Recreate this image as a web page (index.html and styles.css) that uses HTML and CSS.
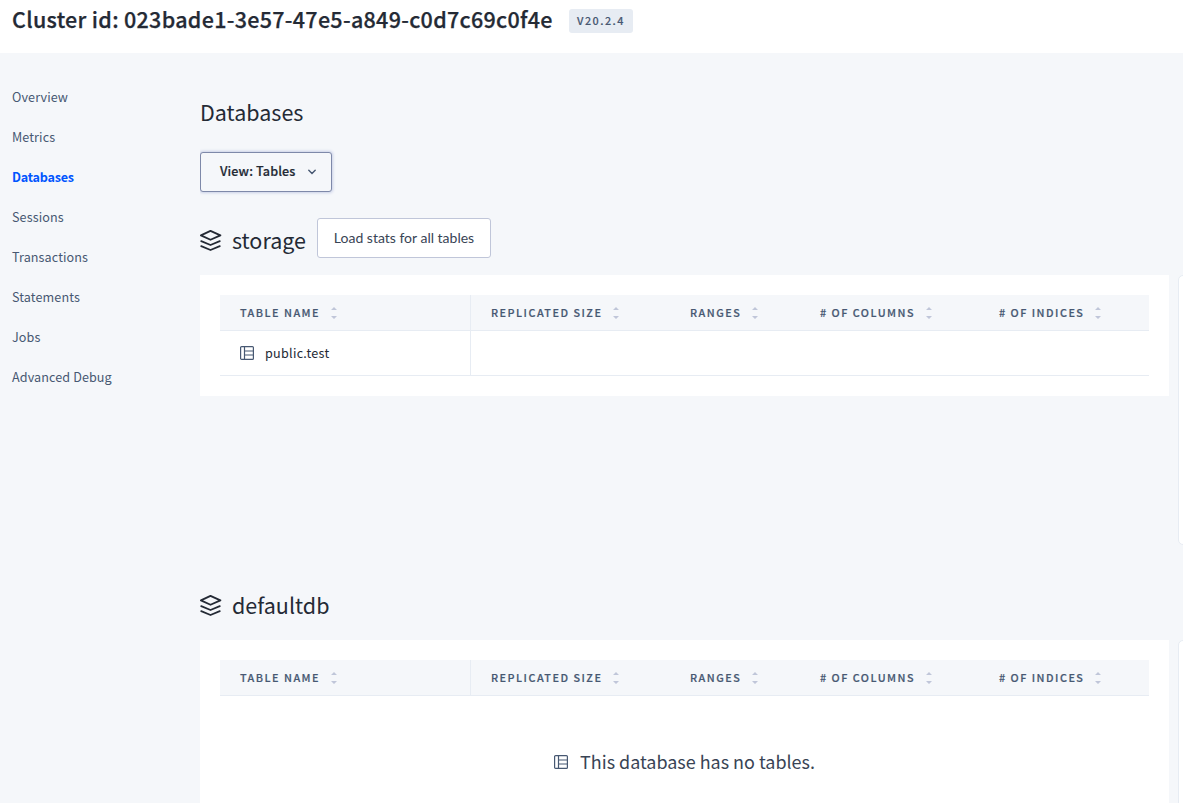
FILE: index.html
```html
<!DOCTYPE html>
<html lang="en">
<head>
<meta charset="utf-8">
<title>Databases</title>
<link rel="stylesheet" href="styles.css">
</head>
<body>
<svg width="0" height="0" class="defs">
  <symbol id="stack" viewBox="0 0 22 22"><g fill="none" stroke="currentColor" stroke-width="1.8" stroke-linejoin="round" stroke-linecap="round"><path d="M10.5 .9 20.4 5.4 10.5 9.8.9 5.4Z"/><path d="M1.2 11.2l9.3 3.8 9.3-3.8"/><path d="M1.2 16.2l9.3 3.8 9.3-3.8"/></g></symbol>
  <symbol id="table" viewBox="0 0 14 14"><g fill="none" stroke="currentColor" stroke-width="1.2"><rect x=".6" y=".6" width="12.8" height="12.8" rx="1"/><path d="M4.5 .6v12.8M4.5 5h9M4.5 9h9"/></g></symbol>
  <symbol id="sort" viewBox="0 0 6 12"><path fill="currentColor" d="M0 3 3 0l3 3zM0 9h6l-3 3z"/></symbol>
</svg>
<header class="header">
  <h1 class="cluster">Cluster id: 023bade1-3e57-47e5-a849-c0d7c69c0f4e</h1>
  <span class="version">V20.2.4</span>
</header>
<div class="body">
  <nav class="nav">
    <a class="link">Overview</a>
    <a class="link">Metrics</a>
    <a class="link active">Databases</a>
    <a class="link">Sessions</a>
    <a class="link">Transactions</a>
    <a class="link">Statements</a>
    <a class="link">Jobs</a>
    <a class="link">Advanced Debug</a>
  </nav>
  <main class="main">
    <h2 class="title">Databases</h2>
    <button class="dropdown"><span>View: Tables</span><svg class="chevron" viewBox="0 0 8 6"><path d="M.8 1.2 4 4.5l3.2-3.3" fill="none" stroke="currentColor" stroke-width="1.4" stroke-linecap="round"/></svg></button>
    <section class="database">
      <div class="heading"><svg class="stack"><use href="#stack"/></svg><h3 class="name">storage</h3><button class="load">Load stats for all tables</button></div>
      <div class="row">
        <div class="card">
          <div class="grid head">
            <div class="cell">TABLE NAME<svg class="sort"><use href="#sort"/></svg></div>
            <div class="cell">REPLICATED SIZE<svg class="sort"><use href="#sort"/></svg></div>
            <div class="cell">RANGES<svg class="sort"><use href="#sort"/></svg></div>
            <div class="cell"># OF COLUMNS<svg class="sort"><use href="#sort"/></svg></div>
            <div class="cell"># OF INDICES<svg class="sort"><use href="#sort"/></svg></div>
          </div>
          <div class="grid record">
            <div class="cell"><svg class="table"><use href="#table"/></svg><span class="tname">public.test</span></div>
          </div>
        </div>
        <aside class="summary"></aside>
      </div>
    </section>
    <section class="database">
      <div class="heading"><svg class="stack"><use href="#stack"/></svg><h3 class="name">defaultdb</h3></div>
      <div class="row">
        <div class="card">
          <div class="grid head">
            <div class="cell">TABLE NAME<svg class="sort"><use href="#sort"/></svg></div>
            <div class="cell">REPLICATED SIZE<svg class="sort"><use href="#sort"/></svg></div>
            <div class="cell">RANGES<svg class="sort"><use href="#sort"/></svg></div>
            <div class="cell"># OF COLUMNS<svg class="sort"><use href="#sort"/></svg></div>
            <div class="cell"># OF INDICES<svg class="sort"><use href="#sort"/></svg></div>
          </div>
          <div class="empty"><svg class="table"><use href="#table"/></svg><span class="message">This database has no tables.</span></div>
        </div>
        <aside class="summary"></aside>
      </div>
    </section>
  </main>
</div>
</body>
</html>
```
FILE: styles.css
```css
* { box-sizing: border-box; }
body {
  margin: 0;
  height: 803px;
  overflow: hidden;
  display: flex;
  flex-direction: column;
  background: #f5f7fa;
  color: #242a35;
  font-family: "Noto Sans CJK SC", "Noto Sans", sans-serif;
}
.defs { display: none; }
svg { flex: none; }
h1, h2, h3 { margin: 0; white-space: nowrap; }
.header {
  display: flex;
  align-items: flex-start;
  flex: none;
  height: 53px;
  padding: 0 12px;
  background: #fff;
}
.cluster {
  width: 557px;
  line-height: 38px;
  font-size: 21.5px;
  font-weight: 500;
  letter-spacing: 0.3px;
  -webkit-text-stroke: 0.25px currentColor;
}
.version {
  width: 64px;
  height: 24px;
  margin-top: 9px;
  padding-left: 8px;
  border-radius: 3px;
  background: #e7ecf3;
  color: #475872;
  font-size: 10.8px;
  font-weight: 500;
  line-height: 22px;
  letter-spacing: 1.5px;
  -webkit-text-stroke: 0.15px currentColor;
}
.body { display: flex; flex: 1; min-height: 0; background: #f5f7fa; }
.nav {
  display: flex;
  flex-direction: column;
  flex: none;
  width: 200px;
  padding: 24px 12px;
}
.link {
  height: 40px;
  line-height: 40px;
  color: #475872;
  font-size: 12.6px;
  letter-spacing: 0.1px;
}
.active { color: #0055ff; font-weight: 700; letter-spacing: -0.23px; }
.main { flex: none; width: 983px; padding-top: 40px; overflow: hidden; }
.title { height: 40px; line-height: 38px; font-size: 21.5px; font-weight: 400; }
.dropdown {
  display: flex;
  align-items: center;
  width: 132px;
  height: 40px;
  margin-top: 19px;
  padding: 0 15px 1px 19px;
  border: 1px solid #7e89a9;
  border-radius: 3px;
  background: #f5f7fa;
  box-shadow: 0 0 3px 1px #c8cfe6;
  color: #242a35;
  font: 500 12.6px "Noto Sans CJK SC", sans-serif;
  letter-spacing: 0.12px;
  -webkit-text-stroke: 0.2px currentColor;
  white-space: nowrap;
}
.dropdown span { width: 88px; padding-bottom: 2px; text-align: left; }
.chevron { width: 8px; height: 6px; color: #475872; }
.database { height: 365px; margin-top: 18px; }
.database + .database { margin-top: 0; }
.heading { display: flex; height: 65px; padding-top: 8px; }
.stack { width: 22px; height: 22px; margin-top: 12px; color: #242a35; }
.name { margin: 2px 0 0 10px; width: 85px; font-size: 21.5px; line-height: 40px; font-weight: 400; }
.load {
  width: 174px;
  height: 40px;
  padding: 0 0 2px;
  border: 1px solid #c0c6d9;
  border-radius: 3px;
  background: #fff;
  color: #394455;
  font: 400 14px Lato, sans-serif;
  white-space: nowrap;
}
.row { display: flex; align-items: flex-start; gap: 9px; }
.card { flex: none; width: 969px; padding: 20px; background: #fff; }
.summary {
  flex: none;
  width: 40px;
  height: 270px;
  border: 1px solid #e7ecf3;
  border-radius: 5px;
  background: #fff;
}
.grid {
  display: grid;
  grid-template-columns: 251px 199px 130px 179px 170px;
  width: 929px;
  border-bottom: 1px solid #e7ecf3;
}
.cell { display: flex; align-items: center; padding-left: 20px; white-space: nowrap; }
.cell:first-child { border-right: 1px solid #e7ecf3; }
.head {
  height: 36px;
  background: #f5f7fa;
  color: #475872;
  font-size: 10.8px;
  font-weight: 500;
  letter-spacing: 1.5px;
  -webkit-text-stroke: 0.2px currentColor;
}
.head .cell { padding-bottom: 2px; }
.sort { width: 6px; height: 12px; margin: 2px 0 0 11px; color: #c0c6d9; }
.record { height: 45px; }
.table { width: 14px; height: 14px; color: #475872; }
.tname { margin-left: 11px; padding-bottom: 2px; font-size: 12.6px; letter-spacing: 0.27px; }
.empty { display: flex; align-items: center; justify-content: center; height: 132px; }
.message { margin-left: 12px; padding-bottom: 2px; color: #394455; font-size: 17.95px; }
```
